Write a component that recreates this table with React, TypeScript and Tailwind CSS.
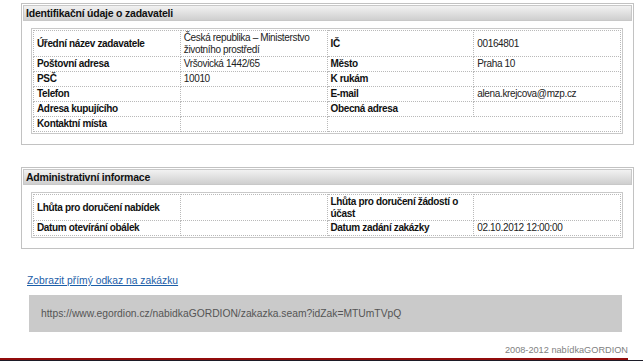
type Row = { l1: string; v1?: string; l2?: string; v2?: string; tall?: boolean };

const zadavatel: Row[] = [
  { l1: 'Úřední název zadavatele', v1: 'Česká republika – Ministerstvo životního prostředí', l2: 'IČ', v2: '00164801', tall: true },
  { l1: 'Poštovní adresa', v1: 'Vršovická 1442/65', l2: 'Město', v2: 'Praha 10' },
  { l1: 'PSČ', v1: '10010', l2: 'K rukám' },
  { l1: 'Telefon', l2: 'E-mail', v2: 'alena.krejcova@mzp.cz' },
  { l1: 'Adresa kupujícího', l2: 'Obecná adresa' },
  { l1: 'Kontaktní místa' },
];

const admin: Row[] = [
  { l1: 'Lhůta pro doručení nabídek', l2: 'Lhůta pro doručení žádostí o účast', tall: true },
  { l1: 'Datum otevírání obálek', l2: 'Datum zadání zakázky', v2: '02.10.2012 12:00:00' },
];

const cell = 'border border-dotted border-[#b9b9b9] align-middle px-[3px] w-1/4';

function InfoTable({ rows }: { rows: Row[] }) {
  return (
    <div className="border border-[#c9c9c9] p-[1px]">
      <table className="w-full border-collapse table-fixed text-[10px] leading-[12px] tracking-[-0.35px]">
        <tbody>
          {rows.map((r, i) => (
            <tr key={i} className={r.tall ? 'h-[26px]' : 'h-[15px]'}>
              <td className={`${cell} font-bold text-[#111]`}>{r.l1}</td>
              <td className={`${cell} text-[#222]`}>{r.v1}</td>
              {r.l2 !== undefined || i < rows.length - 1 ? (
                <>
                  <td className={`${cell} font-bold text-[#111]`}>{r.l2}</td>
                  <td className={`${cell} text-[#222]`}>{r.v2}</td>
                </>
              ) : (
                <td colSpan={2} className={cell} />
              )}
            </tr>
          ))}
        </tbody>
      </table>
    </div>
  );
}

function Panel({ title, children }: { title: string; children: React.ReactNode }) {
  return (
    <div className="border border-[#c2c2c2] p-[1px] pb-[10px]">
      <div className="h-[16px] border border-[#c8c8c8] bg-gradient-to-b from-[#f2f2f2] to-[#cfcfcf] pl-[2px] text-[10.5px] font-bold leading-[14px] tracking-[-0.22px] text-[#111]">
        {title}
      </div>
      <div className="pl-[8px] pr-[9px] pt-[7px]">{children}</div>
    </div>
  );
}

export default function App() {
  return (
    <div className="h-[361px] overflow-hidden bg-white font-['Liberation_Sans',Arial,sans-serif]">
      <div className="ml-[21px] w-[613px] pt-[3px]">
        <Panel title="Identifikační údaje o zadavateli">
          <InfoTable rows={zadavatel} />
        </Panel>
        <div className="h-[22px]" />
        <Panel title="Administrativní informace">
          <InfoTable rows={admin} />
        </Panel>
      </div>
      <div className="ml-[27px] mt-[25px] text-[10.3px] leading-[13px]">
        <a href="#" className="text-[#1b5ea8] underline">Zobrazit přímý odkaz na zakázku</a>
      </div>
      <div className="ml-[29px] mt-[8px] flex h-[37px] w-[593px] items-center bg-[#cacaca] pl-[12px] text-[10.3px] text-[#555]">
        https://www.egordion.cz/nabidkaGORDION/zakazka.seam?idZak=MTUmTVpQ
      </div>
      <div className="w-[628px] pt-[12px] text-right text-[9.2px] leading-[12px] text-[#808080]">
        2008-2012 nabídkaGORDION
      </div>
      <div className="mt-[2px] h-[2px] w-[628px] bg-[#920c0c]" />
      <div className="h-[10px] bg-[#1c1c28]" />
    </div>
  );
}
